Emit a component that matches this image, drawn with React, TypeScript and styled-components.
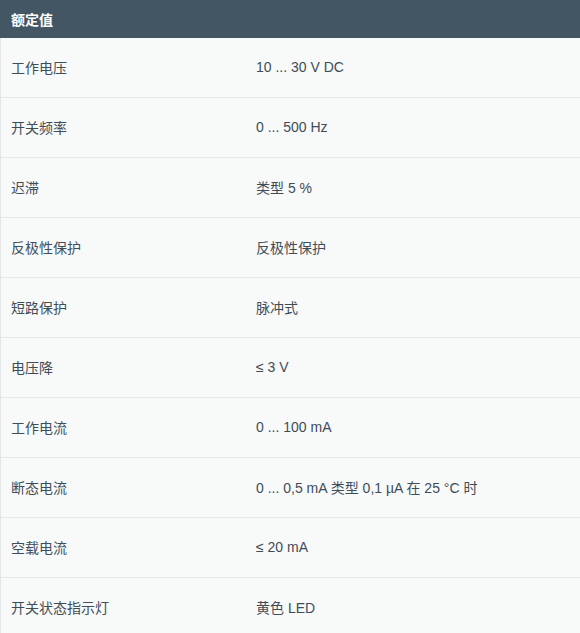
import React from "react";
import styled, { createGlobalStyle } from "styled-components";

const Global = createGlobalStyle`
  html, body { margin: 0; padding: 0; background: #f8f9f9; }
  body { font-family: "Liberation Sans", Arial, "Noto Sans CJK SC", sans-serif; }
`;

const Table = styled.div`
  width: 580px;
  display: flex;
  flex-direction: column;
  background: #f8f9f9;
  border-left: 1px solid #e3e5e6;
  box-sizing: border-box;
`;

const Header = styled.div`
  height: 38px;
  display: flex;
  align-items: center;
  padding-left: 11px;
  padding-bottom: 1px;
  box-sizing: border-box;
  background: #435664;
  color: #ffffff;
  font-size: 14px;
  font-weight: bold;
  margin-left: -1px;
`;

const Row = styled.div`
  display: grid;
  grid-template-columns: 245px 1fr;
  height: 60px;
  align-items: center;
  border-bottom: 1px solid #e6e8e8;
  box-sizing: border-box;
  padding-left: 10px;
  padding-bottom: 2px;
  color: #3f4d58;
  font-size: 14px;
  &:last-child { border-bottom: none; }
`;

const Cell = styled.span`
  white-space: nowrap;
`;

const rows: [string, string][] = [
  ["工作电压", "10 ... 30 V DC"],
  ["开关频率", "0 ... 500 Hz"],
  ["迟滞", "类型 5 %"],
  ["反极性保护", "反极性保护"],
  ["短路保护", "脉冲式"],
  ["电压降", "≤ 3 V"],
  ["工作电流", "0 ... 100 mA"],
  ["断态电流", "0 ... 0,5 mA 类型 0,1 µA 在 25 °C 时"],
  ["空载电流", "≤ 20 mA"],
  ["开关状态指示灯", "黄色 LED"],
];

export default function App() {
  return (
    <>
      <Global />
      <Table>
        <Header>额定值</Header>
        {rows.map(([k, v]) => (
          <Row key={k}>
            <Cell>{k}</Cell>
            <Cell>{v}</Cell>
          </Row>
        ))}
      </Table>
    </>
  );
}
